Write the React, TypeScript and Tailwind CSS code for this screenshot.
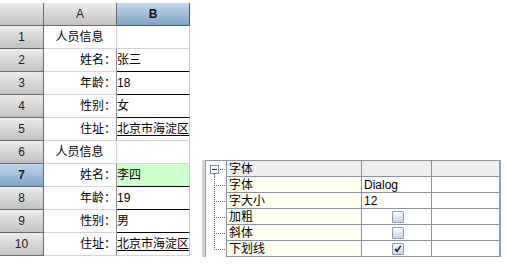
import React from "react";

type Row = { n: number; a: string; b: string; center?: boolean; line?: boolean; under?: boolean; sel?: boolean };

const rows: Row[] = [
  { n: 1, a: "人员信息", b: "", center: true },
  { n: 2, a: "姓名：", b: "张三", line: true },
  { n: 3, a: "年龄：", b: "18", line: true },
  { n: 4, a: "性别：", b: "女", line: true },
  { n: 5, a: "住址：", b: "北京市海淀区", under: true },
  { n: 6, a: "人员信息", b: "", center: true },
  { n: 7, a: "姓名：", b: "李四", line: true, sel: true },
  { n: 8, a: "年龄：", b: "19", line: true },
  { n: 9, a: "性别：", b: "男", line: true },
  { n: 10, a: "住址：", b: "北京市海淀区", under: true },
];

function Sheet() {
  return (
    <div className="mt-[3px] grid w-[190px] grid-cols-[44px_73px_73px] text-[12px] leading-none text-black">
      <div className="h-[23px] border-r border-b border-[#6a6a6a] bg-linear-to-b from-[#ececec] to-[#c2c2c2]" />
      <div className="flex h-[23px] items-center justify-center border-r border-b border-[#6a6a6a] bg-linear-to-b from-[#ececec] to-[#c2c2c2] text-[#222]">
        A
      </div>
      <div className="flex h-[23px] items-center justify-center border-r border-b border-[#4a5a6a] bg-linear-to-b from-[#c4d8ee] to-[#7fa3c9] font-bold text-[#111]">
        B
      </div>
      {rows.map((r) => (
        <React.Fragment key={r.n}>
          <div
            className={
              "flex h-[23px] items-center justify-center border-r border-b border-[#6a6a6a] text-[#222] " +
              (r.sel
                ? "bg-linear-to-b from-[#c4d8ee] to-[#7fa3c9] font-bold"
                : "bg-linear-to-b from-[#ececec] to-[#c2c2c2]")
            }
          >
            {r.n}
          </div>
          <div
            className={
              "flex h-[23px] items-center whitespace-nowrap border-b border-[#d4d4d4] bg-white " +
              (r.center ? "justify-center border-r border-r-[#d4d4d4] pr-[1px]" : "justify-end border-r border-r-[#8c8c8c]")
            }
          >
            {r.a}
          </div>
          <div
            className={
              "flex h-[23px] items-center overflow-hidden whitespace-nowrap border-r border-r-[#c8c8c8] border-b " +
              (r.line ? "border-b-black " : "border-b-[#d4d4d4] ") +
              (r.sel ? "bg-[#ccffcc]" : "bg-white")
            }
          >
            <span className={r.under ? "underline underline-offset-[2px]" : ""}>{r.b}</span>
          </div>
        </React.Fragment>
      ))}
    </div>
  );
}

function TreeCell({ kind }: { kind: "root" | "mid" | "last" }) {
  return (
    <div className="h-[16px] w-[20px] shrink-0 bg-white">
      <svg width="20" height="16" viewBox="0 0 20 16" shapeRendering="crispEdges">
        {kind === "root" ? (
          <>
            <rect x="4.5" y="4.5" width="8" height="8" fill="#fff" stroke="#7b8fa8" />
            <line x1="6" y1="8.5" x2="11" y2="8.5" stroke="#1a3c78" />
            <line x1="14" y1="8.5" x2="20" y2="8.5" stroke="#666" strokeDasharray="1 1" />
            <line x1="8.5" y1="13" x2="8.5" y2="16" stroke="#666" strokeDasharray="1 1" />
          </>
        ) : (
          <>
            <line x1="8.5" y1="0" x2="8.5" y2={kind === "last" ? 9 : 16} stroke="#666" strokeDasharray="1 1" />
            <line x1="10" y1="8.5" x2="20" y2="8.5" stroke="#666" strokeDasharray="1 1" />
          </>
        )}
      </svg>
    </div>
  );
}

function Check({ on }: { on?: boolean }) {
  return (
    <div className="flex h-[12px] w-[12px] items-center justify-center rounded-[1px] border border-[#8b9bb0] bg-linear-to-b from-[#f7fafd] to-[#c6d4e4]">
      {on && (
        <svg width="8" height="8" viewBox="0 0 8 8">
          <path d="M1 4.5 L3 7 L7 1 L6.2 1 L3 5.4 L2 3.8 Z" fill="#1a1a1a" stroke="#1a1a1a" strokeWidth="0.8" />
        </svg>
      )}
    </div>
  );
}

type PRow = { kind: "root" | "mid" | "last"; name: string; value?: string; check?: "off" | "on" };

const prows: PRow[] = [
  { kind: "root", name: "字体" },
  { kind: "mid", name: "字体", value: "Dialog" },
  { kind: "mid", name: "字大小", value: "12" },
  { kind: "mid", name: "加粗", check: "off" },
  { kind: "mid", name: "斜体", check: "off" },
  { kind: "last", name: "下划线", check: "on" },
];

function Panel() {
  return (
    <div className="ml-[12px] mt-[160px] flex">
      <div className="w-[4px] border-r border-[#9a9a9a] bg-[#d4d4d4]" />
      <div className="flex flex-col border-t border-[#8a929c]">
        {prows.map((p, i) => {
          const root = p.kind === "root";
          return (
            <div key={i} className="flex h-[16px] text-[12px] leading-none text-black">
              <TreeCell kind={p.kind} />
              <div
                className={
                  "flex w-[135px] items-center border-l border-b border-[#8a929c] pl-[2px] " +
                  (root ? "bg-[#eeeeee]" : "bg-[#fffff0]")
                }
              >
                {p.name}
              </div>
              <div
                className={
                  "flex w-[70px] items-center border-l border-b border-[#8a929c] pl-[2px] " +
                  (root ? "bg-[#eeeeee]" : "bg-white") +
                  (p.check ? " justify-center pl-0" : "")
                }
              >
                {p.check ? <Check on={p.check === "on"} /> : p.value}
              </div>
              <div
                className={
                  "w-[68px] border-l border-b border-[#8a929c] " + (root ? "bg-[#eeeeee]" : "bg-white")
                }
              />
            </div>
          );
        })}
      </div>
      <div className="w-[2px] bg-[#86a2c4]" />
    </div>
  );
}

export default function App() {
  return (
    <div className="flex h-[264px] w-[507px] items-start overflow-hidden bg-white font-['Liberation_Sans','Noto_Sans_CJK_SC',sans-serif]">
      <Sheet />
      <Panel />
    </div>
  );
}
